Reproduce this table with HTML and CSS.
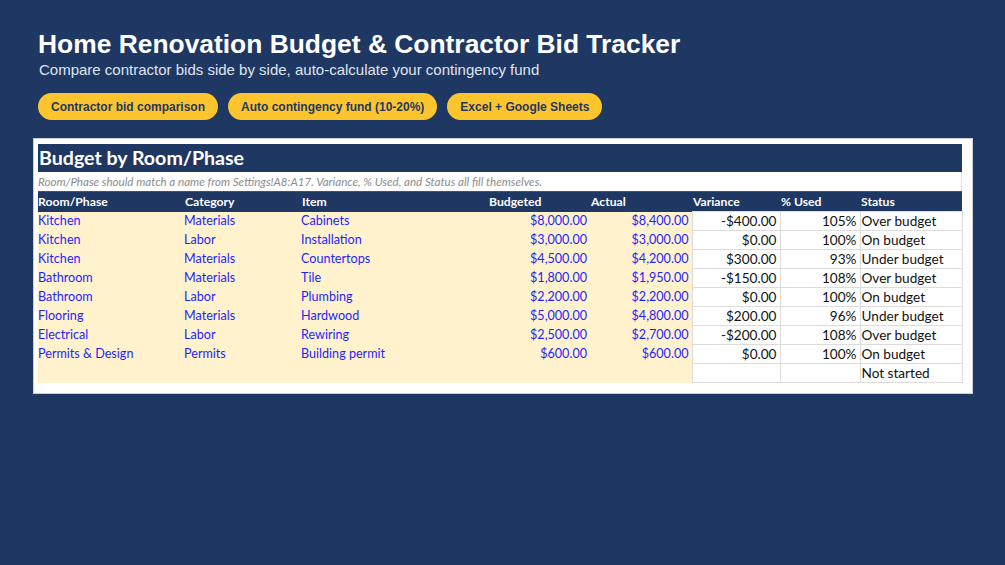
FILE: index.html
```html
<!DOCTYPE html>
<html lang="en">
<head>
<meta charset="utf-8">
<title>Home Renovation Budget &amp; Contractor Bid Tracker</title>
<link rel="stylesheet" href="styles.css">
</head>
<body>
<header class="hero">
  <h1 class="hero-title">Home Renovation Budget &amp; Contractor Bid Tracker</h1>
  <p class="hero-sub">Compare contractor bids side by side, auto-calculate your contingency fund</p>
  <div class="pills">
    <span class="pill">Contractor bid comparison</span>
    <span class="pill">Auto contingency fund (10-20%)</span>
    <span class="pill">Excel + Google Sheets</span>
  </div>
</header>
<section class="sheet">
  <div class="sheet-title">Budget by Room/Phase</div>
  <div class="sheet-note">Room/Phase should match a name from Settings!A8:A17. Variance, % Used, and Status all fill themselves.</div>
  <table class="grid">
    <colgroup>
      <col class="c-room"><col class="c-cat"><col class="c-item"><col class="c-bud"><col class="c-act"><col class="c-var"><col class="c-pct"><col class="c-status">
    </colgroup>
    <thead>
      <tr><th>Room/Phase</th><th>Category</th><th>Item</th><th>Budgeted</th><th>Actual</th><th>Variance</th><th>% Used</th><th>Status</th></tr>
    </thead>
    <tbody>
      <tr><td class="in">Kitchen</td><td class="in">Materials</td><td class="in">Cabinets</td><td class="in num">$8,000.00</td><td class="in num">$8,400.00</td><td class="out num">-$400.00</td><td class="out num">105%</td><td class="out">Over budget</td></tr>
      <tr><td class="in">Kitchen</td><td class="in">Labor</td><td class="in">Installation</td><td class="in num">$3,000.00</td><td class="in num">$3,000.00</td><td class="out num">$0.00</td><td class="out num">100%</td><td class="out">On budget</td></tr>
      <tr><td class="in">Kitchen</td><td class="in">Materials</td><td class="in">Countertops</td><td class="in num">$4,500.00</td><td class="in num">$4,200.00</td><td class="out num">$300.00</td><td class="out num">93%</td><td class="out">Under budget</td></tr>
      <tr><td class="in">Bathroom</td><td class="in">Materials</td><td class="in">Tile</td><td class="in num">$1,800.00</td><td class="in num">$1,950.00</td><td class="out num">-$150.00</td><td class="out num">108%</td><td class="out">Over budget</td></tr>
      <tr><td class="in">Bathroom</td><td class="in">Labor</td><td class="in">Plumbing</td><td class="in num">$2,200.00</td><td class="in num">$2,200.00</td><td class="out num">$0.00</td><td class="out num">100%</td><td class="out">On budget</td></tr>
      <tr><td class="in">Flooring</td><td class="in">Materials</td><td class="in">Hardwood</td><td class="in num">$5,000.00</td><td class="in num">$4,800.00</td><td class="out num">$200.00</td><td class="out num">96%</td><td class="out">Under budget</td></tr>
      <tr><td class="in">Electrical</td><td class="in">Labor</td><td class="in">Rewiring</td><td class="in num">$2,500.00</td><td class="in num">$2,700.00</td><td class="out num">-$200.00</td><td class="out num">108%</td><td class="out">Over budget</td></tr>
      <tr><td class="in">Permits &amp; Design</td><td class="in">Permits</td><td class="in">Building permit</td><td class="in num">$600.00</td><td class="in num">$600.00</td><td class="out num">$0.00</td><td class="out num">100%</td><td class="out">On budget</td></tr>
      <tr><td class="in"></td><td class="in"></td><td class="in"></td><td class="in num"></td><td class="in num"></td><td class="out num"></td><td class="out num"></td><td class="out">Not started</td></tr>
    </tbody>
  </table>
</section>
</body>
</html>
```

FILE: styles.css
```css
html, body {
  margin: 0;
  padding: 0;
}
body {
  background: #1f3763;
  width: 1005px;
  height: 565px;
  overflow: hidden;
  font-family: "Liberation Sans", Arial, sans-serif;
}
.hero {
  padding: 29px 0 0 38px;
}
.hero-title {
  margin: 0;
  color: #ffffff;
  font-size: 26.4px;
  font-weight: 700;
  line-height: 31px;
}
.hero-sub {
  margin: 1px 0 0 1px;
  color: #dfe5ef;
  font-size: 15px;
  line-height: 18px;
}
.pills {
  display: flex;
  gap: 10px;
  margin-top: 14px;
}
.pill {
  display: inline-flex;
  align-items: center;
  height: 27px;
  padding: 0 13px;
  border-radius: 14px;
  background: #fdc52d;
  color: #1f3763;
  font-size: 12px;
  font-weight: 700;
}
.sheet {
  margin: 18px 0 0 33px;
  width: 940px;
  box-sizing: border-box;
  padding: 5px 10px 10px 4px;
  background: #ffffff;
  border: 1px solid #c9cfd9;
  font-family: Lato, "Open Sans", sans-serif;
}
.sheet-title {
  height: 28px;
  line-height: 28px;
  background: #1f3763;
  color: #ffffff;
  font-size: 19.6px;
  font-weight: 700;
  padding-left: 1px;
}
.sheet-note {
  height: 19px;
  line-height: 19px;
  color: #8c8c8c;
  font-size: 11.6px;
  font-style: italic;
  border-right: 1px solid #e3e3e3;
}
.grid {
  border-collapse: collapse;
  table-layout: fixed;
  width: 924px;
}
.c-room { width: 146px; }
.c-cat { width: 117px; }
.c-item { width: 187px; }
.c-bud { width: 102px; }
.c-act { width: 102px; }
.c-var { width: 88px; }
.c-pct { width: 80px; }
.c-status { width: 102px; }
.grid th {
  height: 19px;
  padding: 0 0 0 1px;
  background: #1f3763;
  color: #ffffff;
  font-size: 12.2px;
  font-weight: 700;
  text-align: left;
  line-height: 19px;
  border-top: 1px solid #3b5283;
}
.grid th:first-child {
  padding-left: 0;
}
.grid td {
  height: 18px;
  padding: 0 3px 0 0;
  line-height: 18px;
  white-space: nowrap;
  overflow: hidden;
}
.grid td.in {
  background: #fff2cc;
  color: #1f1fff;
  font-size: 12.6px;
}
.grid td.out {
  background: #ffffff;
  color: #111111;
  font-size: 13.6px;
  border: 1px solid #dcdcdc;
  padding-left: 1px;
}
.grid td.num {
  text-align: right;
}
```
